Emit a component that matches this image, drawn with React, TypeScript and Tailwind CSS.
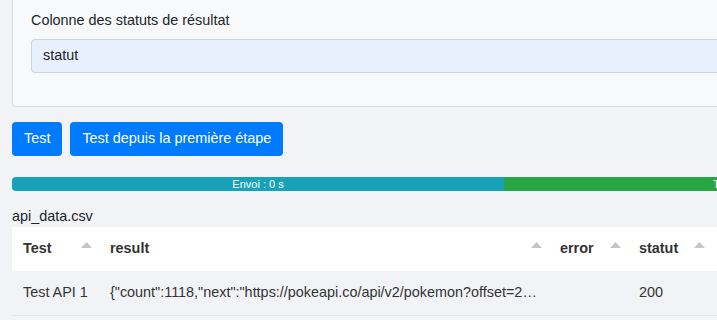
import React from 'react'

function SortIcon() {
  return (
    <svg width="11" height="6" viewBox="0 0 11 6" className="mb-[9px] shrink-0">
      <polygon points="5.5,0 11,6 0,6" fill="#c4c6c9" />
    </svg>
  )
}

const headers = ['Test', 'result', 'error', 'statut']

export default function App() {
  return (
    <div className="w-[717px] h-[320px] overflow-hidden bg-[#f2f3f7] font-['Liberation_Sans',Arial,sans-serif] text-[14.4px] leading-[21.6px] text-[#212529]">
      <div className="w-[1000px] px-3">
        <div className="border border-t-0 border-[#d9dbde] bg-[#f8f9fa] rounded-b-[4px] pt-[10px] pb-[33px] px-[18px]">
          <div className="mb-[7px]">Colonne des statuts de résultat</div>
          <div className="h-[34px] bg-[#e8f0fe] border border-[#ced4da] rounded-[4px] px-[11px] flex items-center">statut</div>
        </div>

        <div className="mt-[15px] flex gap-2">
          <button className="h-[34px] px-3 bg-[#007bff] text-white rounded-[4px]">Test</button>
          <button className="h-[34px] px-3 bg-[#007bff] text-white rounded-[4px]">Test depuis la première étape</button>
        </div>

        <div className="mt-[21px] h-[14px] flex rounded-[4px] overflow-hidden text-[11px] leading-[14px] text-white">
          <div className="w-[492px] bg-[#17a2b8] text-center">Envoi : 0 s</div>
          <div className="flex-1 bg-[#28a745] pl-[209px] whitespace-nowrap">Test : 0 s</div>
        </div>

        <div className="mt-[15px]">api_data.csv</div>

        <div className="w-[705px]">
          <div className="grid grid-cols-[87px_450px_79px_84px_1fr] bg-white h-[44px] font-bold text-[#333]">
            {headers.map((h) => (
              <div key={h} className="flex items-center justify-between pl-[11px] pr-[7px]">
                <span>{h}</span>
                <SortIcon />
              </div>
            ))}
            <div />
          </div>
          <div className="grid grid-cols-[87px_450px_79px_84px_1fr] h-[45px] border-b border-[#e4e6ea] items-center text-[#333]">
            <div className="pl-[11px] whitespace-nowrap">Test API 1</div>
            <div className="px-[11px] truncate">{'{"count":1118,"next":"https://pokeapi.co/api/v2/pokemon?offset=20&limit=20","previous":null}'}</div>
            <div className="pl-[11px]"></div>
            <div className="pl-[11px]">200</div>
            <div />
          </div>
        </div>
      </div>
    </div>
  )
}
